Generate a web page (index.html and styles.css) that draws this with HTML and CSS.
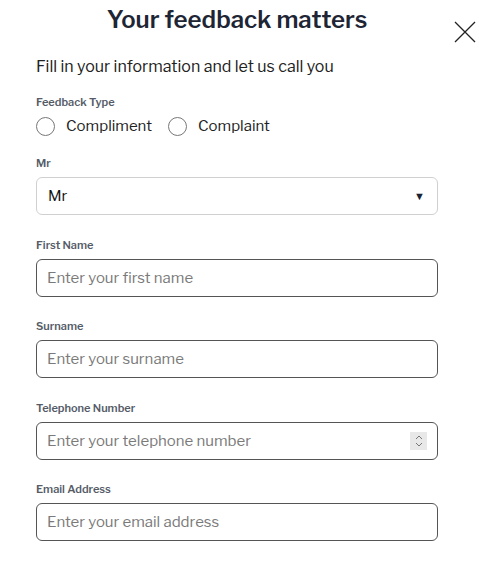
FILE: index.html
```html
<!DOCTYPE html>
<html>
<head>
<meta charset="utf-8">
<link rel="stylesheet" href="styles.css">
</head>
<body>
<div class="modal">
  <button class="close" aria-label="Close">
    <svg width="22" height="22" viewBox="0 0 22 22"><path d="M1 1L21 21M21 1L1 21" stroke="#222" stroke-width="1.3" fill="none"/></svg>
  </button>
  <h1 class="title">Your feedback matters</h1>
  <p class="subtitle">Fill in your information and let us call you</p>
  <div class="field">
    <div class="label">Feedback Type</div>
    <div class="radios">
      <label class="radio"><span class="circle"></span>Compliment</label>
      <label class="radio"><span class="circle"></span>Complaint</label>
    </div>
  </div>
  <div class="field sel">
    <div class="label">Mr</div>
    <div class="select"><span>Mr</span><span class="arrow">▼</span></div>
  </div>
  <div class="field">
    <div class="label">First Name</div>
    <div class="input">Enter your first name</div>
  </div>
  <div class="field">
    <div class="label">Surname</div>
    <div class="input">Enter your surname</div>
  </div>
  <div class="field">
    <div class="label">Telephone Number</div>
    <div class="input tel"><span>Enter your telephone number</span>
      <span class="spin"><svg width="10" height="14" viewBox="0 0 10 14"><path d="M2 5L5 2L8 5M2 9L5 12L8 9" stroke="#777" stroke-width="1" fill="none"/></svg></span>
    </div>
  </div>
  <div class="field">
    <div class="label">Email Address</div>
    <div class="input">Enter your email address</div>
  </div>
</div>
</body>
</html>
```
FILE: styles.css
```css
html, body { margin: 0; padding: 0; background: #fff; }
body { font-family: "Libre Franklin", "Noto Sans", "Liberation Sans", sans-serif; }
.modal { position: relative; width: 402px; padding: 4px 0 0 36px; }
.close { position: absolute; left: 454px; top: 21px; border: 0; background: none; padding: 0; width: 22px; height: 22px; }
.close svg { display: block; }
.title { margin: 0; text-align: center; font-size: 24px; font-weight: 600; color: #1e2535; line-height: 32px; }
.subtitle { margin: 20px 0 0; font-size: 16px; color: #222; line-height: 22px; }
.field { margin-top: 17px; }
.label { font-size: 11px; font-weight: 600; color: #555c68; line-height: 14px; margin-bottom: 7px; }
.radios { display: flex; gap: 16px; }
.radio { display: flex; align-items: center; gap: 11px; font-size: 15px; color: #222; line-height: 20px; }
.circle { width: 17px; height: 17px; border: 1px solid #777; border-radius: 50%; box-sizing: content-box; }
.field.sel { margin-top: 20px; }
.select { height: 36px; border: 1px solid #d0d0d0; border-radius: 6px; display: flex; align-items: center; justify-content: space-between; padding: 0 12px 0 11px; font-size: 15px; color: #111; }
.arrow { font-size: 11px; color: #1a2233; }
.input { height: 36px; border: 1px solid #555; border-radius: 6px; display: flex; align-items: center; padding: 0 10px; font-size: 15px; color: #7a7a7a; }
.field.sel + .field { margin-top: 23px; }
.field + .field + .field + .field { margin-top: 22.4px; }
.tel { justify-content: space-between; }
.spin { width: 17px; height: 18px; background: #e8e8e8; display: flex; align-items: center; justify-content: center; }
```
